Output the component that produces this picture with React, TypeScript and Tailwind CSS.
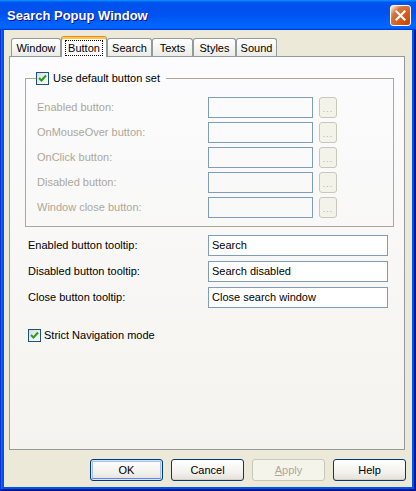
import React from "react";

function Check() {
  return (
    <span className="w-[13px] h-[13px] border border-[#1C5180] bg-[linear-gradient(135deg,#DCDCD7,#FFFFFF)] flex items-center justify-center shrink-0">
      <svg width="9" height="9" viewBox="0 0 9 9">
        <path d="M1 4 L3.5 6.5 L8 1.5" stroke="#21A121" strokeWidth="2" fill="none" />
      </svg>
    </span>
  );
}

const groupRows = [
  "Enabled button:",
  "OnMouseOver button:",
  "OnClick button:",
  "Disabled button:",
  "Window close button:",
];

const tipRows: [string, string][] = [
  ["Enabled button tooltip:", "Search"],
  ["Disabled button tooltip:", "Search disabled"],
  ["Close button tooltip:", "Close search window"],
];

const tabs = [
  { name: "Window", w: "w-[50px]" },
  { name: "Button", w: "w-[46px]", sel: true },
  { name: "Search", w: "w-[45px]" },
  { name: "Texts", w: "w-[41px]" },
  { name: "Styles", w: "w-[43px]" },
  { name: "Sound", w: "w-[41px]" },
];

function Btn({ label, def, disabled }: { label: React.ReactNode; def?: boolean; disabled?: boolean }) {
  if (disabled) {
    return (
      <div className="w-[73px] h-[22px] rounded-[3px] border border-[#C9C7BA] bg-[#F5F4EA] text-[#ACA899] flex items-center justify-center">
        {label}
      </div>
    );
  }
  return (
    <div
      className={
        "w-[73px] h-[22px] rounded-[3px] border border-[#003C74] bg-[linear-gradient(to_bottom,#FFFFFF_0%,#F3F2EE_60%,#E3E0D6_100%)] text-black flex items-center justify-center " +
        (def ? "shadow-[inset_0_0_0_1px_#CEE7FF,inset_0_-2px_0_0_#6982EE,inset_0_0_0_2px_#A6C0F2]" : "shadow-[inset_0_-1px_0_0_#D6D0C5]")
      }
    >
      {label}
    </div>
  );
}

export default function App() {
  return (
    <div className="w-[416px] h-[491px] flex flex-col bg-[#0054E3] shadow-[inset_1px_0_0_0_#0831D9,inset_-1px_-1px_0_0_#00138C,inset_-2px_-2px_0_0_#001EA0,inset_2px_0_0_0_#166AEE] font-['Liberation_Sans',Arial,sans-serif] text-[11px] text-black">
      {/* Title bar */}
      <div className="h-[30px] shrink-0 flex items-center justify-between pl-[7px] pr-[5px] bg-[linear-gradient(180deg,#0997FF,#0053EE_8%,#0050EE_40%,#0066FF_88%,#0066FF_93%,#005BFF_95%,#003DD7_96%,#003DD7)]">
        <span className="text-white font-bold text-[13px] pt-[1px] [text-shadow:1px_1px_0_#0F1089]">Search Popup Window</span>
        <div className="w-[21px] h-[21px] rounded-[3px] border border-white bg-[radial-gradient(circle_at_90%_90%,#CC4600_0%,#DC6527_55%,#CD7546_70%,#FFCCB2_90%,#FFFFFF_100%)] flex items-center justify-center">
          <svg width="11" height="11" viewBox="0 0 11 11">
            <path d="M1.5 1.5 L9.5 9.5 M9.5 1.5 L1.5 9.5" stroke="white" strokeWidth="2.2" strokeLinecap="square" />
          </svg>
        </div>
      </div>

      {/* Client */}
      <div className="flex-1 mx-[4px] mb-[4px] bg-[#ECE9D8] flex flex-col pl-[5px] pr-[7px] pt-[6px] pb-[6px]">
        {/* Tabs */}
        <div className="h-[20px] flex items-end pl-[2px] shrink-0">
          {tabs.map((t) =>
            t.sel ? (
              <div
                key={t.name}
                className={t.w + " relative z-10 h-[21px] -mb-px border-x border-t border-x-[#919B9C] border-t-[#E68B2C] rounded-t-[3px] bg-[#FCFCFE] shadow-[inset_0_2px_0_0_#FFC83C] flex items-center justify-center pt-[1px]"}
              >
                <span className="outline outline-1 outline-dotted outline-black px-[2px] leading-[14px]">{t.name}</span>
              </div>
            ) : (
              <div
                key={t.name}
                className={t.w + " h-[18px] border-x border-t border-[#919B9C] rounded-t-[3px] bg-[linear-gradient(to_bottom,#FFFFFF,#ECEBE6)] flex items-center justify-center pt-[1px]"}
              >
                {t.name}
              </div>
            )
          )}
        </div>

        {/* Panel */}
        <div className="flex-1 border border-[#919B9C] bg-[linear-gradient(to_bottom,#FCFCFE,#F4F3EE)] flex flex-col">
          {/* Group box */}
          <div className="mt-[21px] ml-[15px] mr-[10px] border border-[#ACA899] pl-[11px] pb-[8px] flex flex-col">
            <div className="-mt-[8px] ml-[-1px] w-fit h-[14px] flex items-center gap-[4px] pr-[6px] bg-[#FBFBFC]">
              <Check />
              <span>Use default button set</span>
            </div>
            <div className="mt-[12px] flex flex-col gap-[4px]">
              {groupRows.map((r) => (
                <div key={r} className="flex items-center h-[21px]">
                  <span className="w-[171px] text-[#ACA899]">{r}</span>
                  <div className="w-[105px] h-[21px] border border-[#7F9DB9]" />
                  <div className="ml-[6px] w-[18px] h-[21px] rounded-[3px] border border-[#C9C7BA] bg-[#F4F3EA] flex items-end justify-center pb-[3px] text-[9px] leading-[9px] text-[#B8A8A0] tracking-[1px]">
                    ...
                  </div>
                </div>
              ))}
            </div>
          </div>

          {/* Tooltips */}
          <div className="mt-[8px] pl-[18px] flex flex-col gap-[5px]">
            {tipRows.map(([l, v]) => (
              <div key={l} className="flex items-center h-[21px]">
                <span className="w-[180px]">{l}</span>
                <div className="w-[180px] h-[21px] border border-[#7F9DB9] bg-white flex items-center pl-[3px]">{v}</div>
              </div>
            ))}
          </div>

          <div className="mt-[21px] pl-[18px] flex items-center gap-[3px] h-[13px]">
            <Check />
            <span>Strict Navigation mode</span>
          </div>
        </div>

        {/* Buttons */}
        <div className="mt-[9px] h-[22px] shrink-0 flex justify-end gap-[8px] mr-[-1px]">
          <Btn label="OK" def />
          <Btn label="Cancel" />
          <Btn label={<span><span className="underline">A</span>pply</span>} disabled />
          <Btn label="Help" />
        </div>
      </div>
    </div>
  );
}
